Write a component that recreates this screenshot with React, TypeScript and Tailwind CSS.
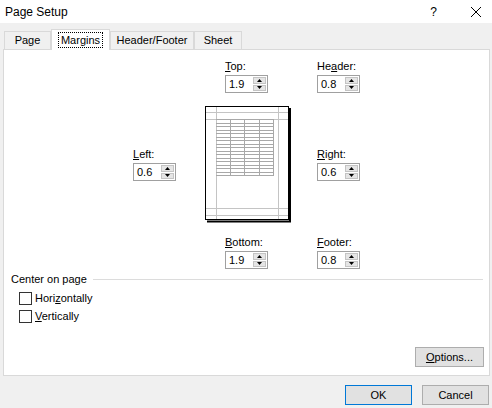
import React from "react";

function Spin() {
  return (
    <div className="flex flex-col gap-px pr-px py-px h-full">
      <div className="flex-1 w-[13px] bg-[#e5e5e5] border border-[#c4c4c4] flex items-center justify-center">
        <svg width="5" height="3" viewBox="0 0 5 3"><path d="M2.5 0 L5 3 L0 3 Z" fill="#000" /></svg>
      </div>
      <div className="flex-1 w-[13px] bg-[#e5e5e5] border border-[#c4c4c4] flex items-center justify-center">
        <svg width="5" height="3" viewBox="0 0 5 3"><path d="M0 0 L5 0 L2.5 3 Z" fill="#000" /></svg>
      </div>
    </div>
  );
}

function Field({ pre, u, post, value }: { pre: string; u: string; post: string; value: string }) {
  return (
    <div className="flex flex-col">
      <div className="h-[15px] leading-[15px]">
        {pre}<span className="underline">{u}</span>{post}
      </div>
      <div className="mt-px w-[43px] h-[18px] border border-[#a0a0a0] bg-white flex items-stretch">
        <div className="flex-1 pl-[3px] leading-[16px]">{value}</div>
        <Spin />
      </div>
    </div>
  );
}

function Preview() {
  const rows: number[] = [];
  for (let y = 13; y <= 70; y += 3.5) rows.push(y);
  return (
    <svg width="87" height="117" viewBox="0 0 87 117">
      <rect x="0.5" y="0.5" width="83" height="113" fill="#fff" stroke="#000" />
      <line x1="85" y1="2" x2="85" y2="116" stroke="#000" strokeWidth="2" />
      <line x1="2" y1="115.5" x2="86" y2="115.5" stroke="#000" strokeWidth="2" />
      <g stroke="#c4c4c4" strokeWidth="1">
        <line x1="1" y1="6.5" x2="83" y2="6.5" />
        <line x1="1" y1="13.5" x2="83" y2="13.5" />
        <line x1="1" y1="102.5" x2="83" y2="102.5" />
        <line x1="1" y1="109.5" x2="83" y2="109.5" />
        <line x1="11.5" y1="1" x2="11.5" y2="113" />
        <line x1="73.5" y1="1" x2="73.5" y2="113" />
      </g>
      <g stroke="#a8a8a8" strokeWidth="1">
        {rows.map((y) => (
          <line key={y} x1="11" y1={Math.round(y) + 0.5} x2="68" y2={Math.round(y) + 0.5} />
        ))}
        <line x1="25.5" y1="13" x2="25.5" y2="70" />
        <line x1="39.5" y1="13" x2="39.5" y2="70" />
        <line x1="54.5" y1="13" x2="54.5" y2="70" />
        <line x1="68.5" y1="13" x2="68.5" y2="70" />
      </g>
    </svg>
  );
}

export default function App() {
  return (
    <div className="w-[492px] h-[408px] bg-[#f0f0f0] flex flex-col text-[11px] text-black font-['Liberation_Sans',Arial,sans-serif] overflow-hidden">
      {/* title bar */}
      <div className="h-[23px] bg-white flex items-center pl-[5px] shrink-0">
        <span className="text-[12px]">Page Setup</span>
        <span className="ml-auto text-[12px] mr-[34px]">?</span>
        <svg width="10" height="10" viewBox="0 0 10 10" className="mr-[11px]">
          <path d="M0 0 L10 10 M10 0 L0 10" stroke="#000" strokeWidth="1" />
        </svg>
      </div>

      {/* tabs */}
      <div className="flex items-end pl-[4px] h-[26px] shrink-0 relative z-10">
        <div className="w-[47px] h-[18px] border border-b-0 border-[#d9d9d9] flex items-center justify-center">Page</div>
        <div className="w-[59px] h-[21px] -mb-px bg-white border border-b-0 border-[#d9d9d9] flex items-center justify-center">
          <span className="border border-dotted border-black px-[2px] leading-[14px]">Margins</span>
        </div>
        <div className="w-[84px] h-[18px] border border-b-0 border-[#d9d9d9] flex items-center justify-center">Header/Footer</div>
        <div className="w-[48px] h-[18px] border border-b-0 border-[#d9d9d9] flex items-center justify-center">Sheet</div>
      </div>

      {/* panel */}
      <div className="ml-[3px] w-[487px] h-[327px] bg-white border border-[#d9d9d9] flex flex-col shrink-0">
        <div className="flex pt-[9px] pl-[129px]">
          <div className="w-[43px] flex flex-col justify-center">
            <Field pre="" u="L" post="eft:" value="0.6" />
          </div>
          <div className="ml-[29px] w-[87px] h-[210px] flex flex-col justify-between items-start">
            <div className="ml-[20px]"><Field pre="" u="T" post="op:" value="1.9" /></div>
            <Preview />
            <div className="ml-[20px]"><Field pre="" u="B" post="ottom:" value="1.9" /></div>
          </div>
          <div className="ml-[25px] h-[210px] flex flex-col justify-between">
            <Field pre="He" u="a" post="der:" value="0.8" />
            <Field pre="" u="R" post="ight:" value="0.6" />
            <Field pre="" u="F" post="ooter:" value="0.8" />
          </div>
        </div>

        <div className="flex items-center pl-[7px] pr-[6px] mt-[3px] h-[15px]">
          <span>Center on page</span>
          <div className="flex-1 h-px bg-[#dcdcdc] ml-[6px]" />
        </div>
        <div className="flex flex-col pl-[15px] mt-[5px] gap-[5px]">
          <div className="flex items-center h-[13px]">
            <div className="w-[13px] h-[13px] border border-[#333] bg-white" />
            <span className="ml-[3px]">Hori<span className="underline">z</span>ontally</span>
          </div>
          <div className="flex items-center h-[13px]">
            <div className="w-[13px] h-[13px] border border-[#333] bg-white" />
            <span className="ml-[3px]"><span className="underline">V</span>ertically</span>
          </div>
        </div>

        <div className="flex-1" />
        <div className="flex justify-end pr-[5px] pb-[8px]">
          <div className="w-[69px] h-[20px] bg-[#e1e1e1] border border-[#adadad] flex items-center justify-center">
            <span><span className="underline">O</span>ptions...</span>
          </div>
        </div>
      </div>

      {/* buttons */}
      <div className="flex justify-end gap-[10px] pr-[3px] pt-[9px]">
        <div className="w-[67px] h-[20px] bg-[#e1e1e1] border border-[#0078d7] flex items-center justify-center">OK</div>
        <div className="w-[67px] h-[20px] bg-[#e1e1e1] border border-[#adadad] flex items-center justify-center">Cancel</div>
      </div>
    </div>
  );
}
